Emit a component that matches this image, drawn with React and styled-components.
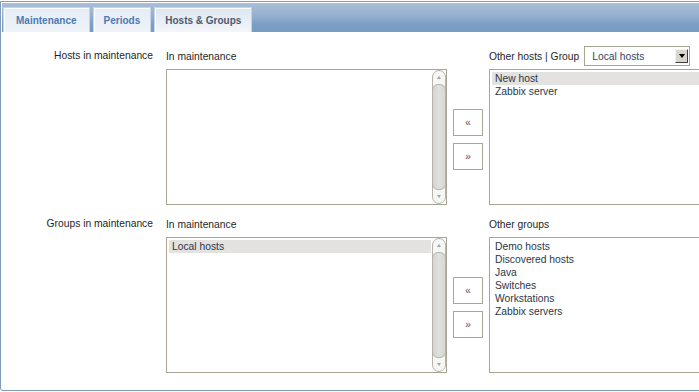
import styled, { createGlobalStyle } from "styled-components";

const GlobalStyle = createGlobalStyle`
	html, body {
		margin: 0;
		padding: 0;
		overflow: hidden;
		background: #fff;
	}
	body {
		font-family: "Liberation Sans", Arial, sans-serif;
		font-size: 10.3px;
		color: #1f1f1f;
	}
`;

const Frame = styled.div`
	box-sizing: border-box;
	width: 800px;
	height: 390px;
	margin-top: 1px;
	padding: 1px;
	border: 1px solid #7e99ba;
	border-radius: 0 0 3px 3px;
	background: #fff;
`;

const TabBar = styled.div`
	display: flex;
	align-items: flex-end;
	gap: 3px;
	height: 29px;
	padding-left: 1px;
	background: linear-gradient(#aabfd7 0%, #93afcf 45%, #7b9ec4 75%, #789bc2 100%);
`;

const Tab = styled.div`
	box-sizing: border-box;
	height: 25px;
	padding: 0 ${(p) => p.$pad || 10}px;
	display: flex;
	align-items: center;
	font-weight: bold;
	font-size: 10px;
	border: 1px solid #c6d4e4;
	border-bottom: none;
	box-shadow: inset 1px 1px 0 #fbfcfe;
	color: ${(p) => (p.$active ? "#4b5b71" : "#4a7ab3")};
	background: ${(p) =>
		p.$active
			? "linear-gradient(#dde6f0, #f3f6fa)"
			: "linear-gradient(#e6edf6, #eff3f9)"};
`;

const Body = styled.div`
	padding-top: 14px;
	display: grid;
	grid-template-columns: 164px auto;
	row-gap: 9px;
`;

const Label = styled.div`
	text-align: right;
	padding-right: 13px;
	line-height: 20px;
	color: #1f1f1f;
`;

const Selector = styled.div`
	display: grid;
	grid-template-columns: 281px 42px 281px;
	grid-template-rows: 20px 136px;
	row-gap: 3px;
`;

const Caption = styled.div`
	display: flex;
	align-items: center;
	gap: 5px;
	color: #1f1f1f;
`;

const Select = styled.div`
	box-sizing: border-box;
	width: 106px;
	height: 20px;
	border: 1px solid #a9a596;
	display: flex;
	align-items: center;
	justify-content: space-between;
	padding: 0 1px 0 7px;
	color: #34465e;
	background: #fff;
`;

const SelectArrow = styled.span`
	box-sizing: border-box;
	width: 13px;
	height: 14px;
	border: 1px solid;
	border-color: #f4f3f0 #404040 #404040 #f4f3f0;
	background: #d8d5cd;
	display: flex;
	align-items: center;
	justify-content: center;

	&::after {
		content: "";
		border-left: 3.5px solid transparent;
		border-right: 3.5px solid transparent;
		border-top: 4px solid #000;
	}
`;

const ListBox = styled.div`
	box-sizing: border-box;
	border: 1px solid #a9a596;
	display: flex;
	background: #fff;
	overflow: hidden;
`;

const Items = styled.div`
	flex: 1;
	padding: 2px 1px 2px 2px;
`;

const Item = styled.div`
	height: 13px;
	line-height: 13px;
	padding-left: 3px;
	white-space: nowrap;
	color: #2c3747;
	background: ${(p) => (p.$selected ? "#e3e2e0" : "transparent")};
`;

const Scrollbar = styled.div`
	box-sizing: border-box;
	width: 14px;
	display: flex;
	flex-direction: column;
	border: 1px solid #b6b3aa;
	border-radius: 7px;
	background: #f6f6f5;
	overflow: hidden;
`;

const ScrollButton = styled.div`
	height: 13px;
	flex: none;
	display: flex;
	align-items: center;
	justify-content: center;

	&::after {
		content: "";
		border-left: 2.5px solid transparent;
		border-right: 2.5px solid transparent;
		${(p) =>
			p.$up
				? "border-bottom: 3px solid #a3a3a3;"
				: "border-top: 3px solid #a3a3a3;"}
	}
`;

const Thumb = styled.div`
	flex: 1;
	margin: 0 -1px;
	border: 1px solid #b6b3aa;
	border-radius: 6px;
	background: linear-gradient(90deg, #d6d4d0, #e2e0dd 50%, #d8d6d2);
`;

const Arrows = styled.div`
	display: flex;
	flex-direction: column;
	align-items: center;
	justify-content: center;
	gap: 7px;
	padding-top: 5px;
`;

const MoveButton = styled.div`
	box-sizing: border-box;
	width: 30px;
	height: 27px;
	border: 1px solid #a9a596;
	display: flex;
	align-items: center;
	justify-content: center;
	font-size: 10px;
	color: #8a4030;
	background: #fff;
`;

function List({ items, selected, scroll }) {
	return (
		<ListBox>
			<Items>
				{items.map((name) => (
					<Item key={name} $selected={name === selected}>
						{name}
					</Item>
				))}
			</Items>
			{scroll && (
				<Scrollbar>
					<ScrollButton $up />
					<Thumb />
					<ScrollButton />
				</Scrollbar>
			)}
		</ListBox>
	);
}

function TwinList({ left, right, rightCaption, leftSelected, rightSelected }) {
	return (
		<Selector>
			<Caption>In maintenance</Caption>
			<div />
			<Caption>{rightCaption}</Caption>
			<List items={left} selected={leftSelected} scroll />
			<Arrows>
				<MoveButton>«</MoveButton>
				<MoveButton>»</MoveButton>
			</Arrows>
			<List items={right} selected={rightSelected} />
		</Selector>
	);
}

export default function App() {
	return (
		<>
			<GlobalStyle />
			<Frame>
				<TabBar>
					<Tab $pad={12}>Maintenance</Tab>
					<Tab>Periods</Tab>
					<Tab $active>Hosts &amp; Groups</Tab>
				</TabBar>
				<Body>
					<Label>Hosts in maintenance</Label>
					<TwinList
						left={[]}
						right={["New host", "Zabbix server"]}
						rightSelected="New host"
						rightCaption={
							<>
								Other hosts | Group
								<Select>
									Local hosts
									<SelectArrow />
								</Select>
							</>
						}
					/>
					<Label>Groups in maintenance</Label>
					<TwinList
						left={["Local hosts"]}
						leftSelected="Local hosts"
						right={[
							"Demo hosts",
							"Discovered hosts",
							"Java",
							"Switches",
							"Workstations",
							"Zabbix servers",
						]}
						rightCaption="Other groups"
					/>
				</Body>
			</Frame>
		</>
	);
}
